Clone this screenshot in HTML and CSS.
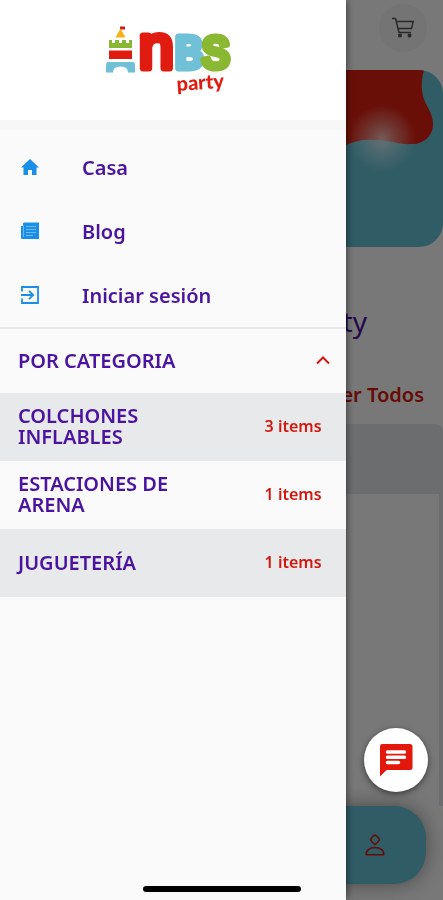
FILE: index.html
```html
<!DOCTYPE html>
<html lang="es">
<head>
    <meta charset="UTF-8">
    <meta name="viewport" content="width=device-width, initial-scale=1.0">
    <title>NBS Party</title>
    <link rel="stylesheet" href="styles.css">
</head>
<body>
    <main class="home">
        <header class="topbar">
            <button class="cart" aria-label="Carrito">
                <svg width="24" height="22" viewBox="0 0 24 22" fill="none" stroke="#555" stroke-width="1.5">
                    <path d="M1 1.500h3.500L8 15.500h12M5.200 4.500h17L20.500 11.500H7"/>
                    <circle cx="9" cy="18.500" r="1.300" fill="#555"/>
                    <circle cx="18.500" cy="18.500" r="1.300" fill="#555"/>
                </svg>
            </button>
        </header>
        <div class="banner">
            <svg class="banner-art" viewBox="0 0 97 177" width="97" height="177">
                <defs>
                    <radialGradient id="glow">
                        <stop offset="0" stop-color="#fff" stop-opacity=".7"/>
                        <stop offset=".4" stop-color="#fff" stop-opacity=".4"/>
                        <stop offset="1" stop-color="#fff" stop-opacity="0"/>
                    </radialGradient>
                </defs>
                <path fill="#db2111" d="M0 0H78C74 14 76 26 80 34C84 41 87 47 87 54C87 66 78 74 66 74C52 75 44 70 30 70C16 69 10 71 0 75Z"/>
                <circle cx="36" cy="69" r="34" fill="url(#glow)"/>
            </svg>
        </div>
        <h1 class="title">Party</h1>
        <a class="see-all" href="#">Ver Todos</a>
        <div class="card"></div>
        <div class="panel"></div>
        <nav class="tabbar">
            <a href="#" aria-label="Cuenta">
                <svg width="20" height="22" viewBox="0 0 20 22" fill="none" stroke="#d5180f" stroke-width="1.500">
                    <path d="M10 1Q12 1.500 14.500 5.500Q12.500 9.500 10 10.500Q7.500 9.500 5.500 5.500Q8 1.500 10 1Z"/>
                    <path d="M1.200 20.800C1 16 5 13.600 10 13.600S19 16 18.800 20.800Z" stroke-linejoin="round"/>
                </svg>
            </a>
        </nav>
    </main>

    <div class="scrim"></div>

    <aside class="drawer">
        <div class="brand">
            <svg width="132" height="106" viewBox="0 -20 132 106" role="img" aria-label="NBS Party">
                <!-- castle -->
                <path fill="#d5180f" d="M15 0.500h5v3h-5z"/>
                <path fill="#f6b21b" d="M15.500 2.500L20.500 11.500H10.500Z"/>
                <path fill="#8ab833" d="M4 14h3v3h3v-3h4v3h3v-3h4v3h3v-3h3v8H4z"/>
                <path fill="#e01b10" d="M4 24.500h23v8.500H4z"/>
                <path fill="#70c0d8" d="M3 36h25q2 0 2 4v6.500h-7q0-6-7.500-6t-7.500 6H1V40q0-4 2-4z"/>
                <g class="logo-text">
                    <text class="logo-n" x="34" y="42">n</text>
                    <text class="logo-b" x="70" y="42">B</text>
                    <text class="logo-s" x="97" y="42">S</text>
                    <text class="logo-party" x="72" y="65" transform="rotate(-4 72 65)">party</text>
                </g>
            </svg>
        </div>
        <ul class="menu">
            <li><a href="#">
                <svg width="20" height="20" viewBox="0 0 20 20"><path fill="#1a8fe8" d="M10 2L1 10.500h2.500V18H8v-5h4v5h4.500v-7.500H19Z"/></svg>
                <span>Casa</span>
            </a></li>
            <li><a href="#">
                <svg width="20" height="20" viewBox="0 0 20 20">
                    <path fill="#1a8fe8" d="M4 1.500h15V18H2.500Q1 18 1 16.500V5h2V2.500Z"/>
                    <path stroke="#6db9f3" stroke-width="1" d="M6 5.500h10M6 8.500h10M6 11.500h10M6 14.500h7M3.500 4.500V16"/>
                </svg>
                <span>Blog</span>
            </a></li>
            <li><a href="#">
                <svg width="20" height="20" viewBox="0 0 20 20" fill="none" stroke="#1a8fe8" stroke-width="1.800">
                    <path d="M2 6.500V2h16v16H2v-4.500M1 10h12M9 5.800l4.200 4.200L9 14.200"/>
                </svg>
                <span>Iniciar sesión</span>
            </a></li>
        </ul>
        <button class="category-toggle" aria-expanded="true">
            POR CATEGORIA
            <svg width="14" height="10" viewBox="0 0 14 10" fill="none" stroke="#d5180f" stroke-width="2"><path d="M1 8.500L7 2.500L13 8.500"/></svg>
        </button>
        <ul class="categories">
            <li><a href="#"><span class="name">COLCHONES INFLABLES</span><span class="count">3 items</span></a></li>
            <li><a href="#"><span class="name">ESTACIONES DE ARENA</span><span class="count">1 items</span></a></li>
            <li><a href="#"><span class="name">JUGUETERÍA</span><span class="count">1 items</span></a></li>
        </ul>
    </aside>

    <button class="chat" aria-label="Chat">
        <svg width="34" height="34" viewBox="0 0 34 34">
            <path fill="#e3170c" d="M3 1h28q2.500 0 2.500 2.500v21q0 2.500-2.500 2.500H7.500L1 33.500V3.500Q1 1 3 1z"/>
            <path stroke="#fff" stroke-width="3.500" stroke-linecap="round" d="M8.500 9h17M8.500 14.200h17M8.500 19.400h11"/>
        </svg>
    </button>
    <div class="home-indicator"></div>
</body>
</html>
```

FILE: styles.css
```css
* {
    box-sizing: border-box;
}

body {
    margin: 0;
    background-color: #fafafa;
    color: #4a14a0;
    font-family: "Noto Sans", "Open Sans", sans-serif;
    font-size: 20px;
    font-weight: 600;
}

a {
    color: inherit;
    text-decoration: none;
}

button {
    border: none;
    font: inherit;
    color: inherit;
    cursor: pointer;
}

ul {
    list-style: none;
    margin: 0;
    padding: 0;
}

svg {
    display: block;
    flex: none;
}

/* page behind the drawer */
.home {
    display: flex;
    flex-direction: column;
    min-height: 100vh;
}

.topbar {
    display: flex;
    justify-content: flex-end;
    align-items: center;
    height: 70px;
    padding: 0 16px 14px 0;
}

.cart {
    display: flex;
    align-items: center;
    justify-content: center;
    width: 48px;
    height: 48px;
    border-radius: 50%;
    background-color: #f3f3f3;
}

.banner {
    display: flex;
    justify-content: flex-end;
    height: 177px;
    border-radius: 24px;
    background-color: #64c0d5;
    overflow: hidden;
}

.title {
    margin: 52px 76px 0 0;
    font-size: 28px;
    font-weight: 400;
    line-height: 44px;
    text-align: right;
}

.see-all {
    margin: 38px 19px 0 0;
    color: #d5180f;
    line-height: 28px;
    text-align: right;
}

.card {
    height: 70px;
    margin-top: 15px;
    border-radius: 0 8px 0 0;
    background-color: #e0e3e5;
}

.panel {
    flex: 1;
    border-right: 4px solid #e0e3e5;
}

.tabbar {
    display: flex;
    align-items: center;
    justify-content: flex-end;
    height: 78px;
    margin: 0 17px 16px;
    padding-right: 41px;
    border-radius: 32px;
    background-color: #64c0d5;
    box-shadow: 0 0 20px rgba(0, 0, 0, 0.4);
}

.scrim {
    position: fixed;
    inset: 0;
    background-color: rgba(0, 0, 0, 0.52);
}

/* drawer */
.drawer {
    position: fixed;
    top: 0;
    bottom: 0;
    left: 0;
    width: 78%;
    background-color: #fafafa;
    box-shadow: 0 0 8px rgba(0, 0, 0, 0.6);
    overflow-y: auto;
}

.brand {
    display: flex;
    justify-content: center;
    height: 120px;
    padding: 6px 4px 0 0;
    background-color: #fff;
    box-shadow: 0 10px 0 #f7f7f7;
}

.logo-text {
    font-family: "Liberation Mono", monospace;
    font-size: 46px;
    font-weight: 400;
    stroke-width: 7px;
    stroke-linejoin: round;
}

.logo-n {
    font-family: "Liberation Sans", sans-serif;
    font-size: 62px;
    fill: #e01b10;
    stroke: #e01b10;
}

.logo-b {
    fill: #70c0d8;
    stroke: #70c0d8;
}

.logo-s {
    fill: #8ab833;
    stroke: #8ab833;
}

.logo-party {
    font-family: "Lato", sans-serif;
    font-size: 20px;
    font-weight: 900;
    fill: #e01b10;
    stroke: none;
}

.menu {
    padding-top: 15px;
    border-bottom: 2px solid #e8e8e8;
}

.menu a {
    display: flex;
    align-items: center;
    gap: 42px;
    height: 64px;
    padding: 0 20px;
}

.category-toggle {
    display: flex;
    align-items: center;
    justify-content: space-between;
    width: 100%;
    height: 64px;
    padding: 0 16px 2px 18px;
    background: none;
}

.categories a {
    display: flex;
    align-items: center;
    justify-content: space-between;
    height: 68px;
    padding: 0 24px 2px 18px;
    line-height: 21px;
}

.categories li:nth-child(odd) {
    background-color: #e8e9ea;
}

.name {
    width: 160px;
}

.count {
    color: #d5180f;
    font-size: 16px;
}

/* floating items */
.chat {
    position: fixed;
    right: 15px;
    bottom: 108px;
    display: flex;
    align-items: center;
    justify-content: center;
    width: 64px;
    height: 64px;
    border-radius: 50%;
    background-color: #fff;
    box-shadow: 0 2px 6px rgba(0, 0, 0, 0.5);
}

.home-indicator {
    position: fixed;
    bottom: 8px;
    left: 50%;
    width: 158px;
    height: 6px;
    margin-left: -79px;
    border-radius: 3px;
    background-color: #000;
}
```
